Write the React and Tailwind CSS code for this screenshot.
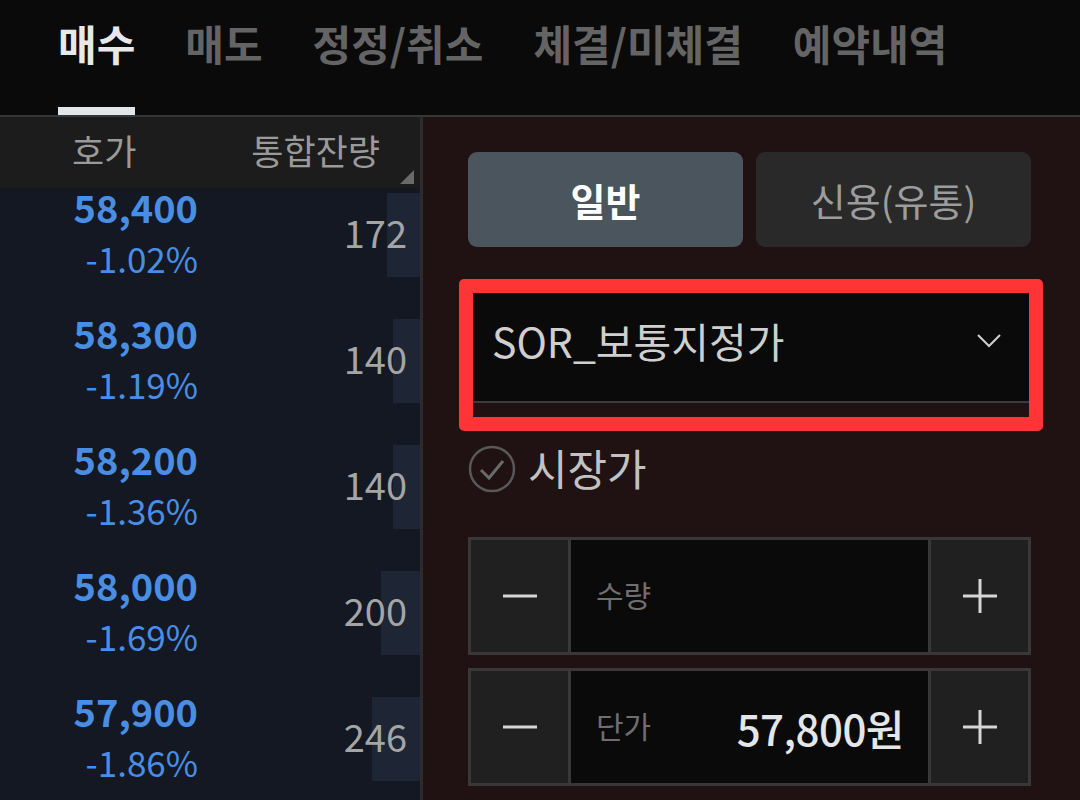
import React from "react";

const tabs = ["매수", "매도", "정정/취소", "체결/미체결", "예약내역"];

const rows = [
  { price: "58,400", pct: "-1.02%", vol: 172 },
  { price: "58,300", pct: "-1.19%", vol: 140 },
  { price: "58,200", pct: "-1.36%", vol: 140 },
  { price: "58,000", pct: "-1.69%", vol: 200 },
  { price: "57,900", pct: "-1.86%", vol: 246 },
];

const Minus = () => (
  <svg width="34" height="4" viewBox="0 0 34 4">
    <rect x="0" y="0.5" width="34" height="3" fill="#d6d6d6" />
  </svg>
);

const Plus = () => (
  <svg width="34" height="34" viewBox="0 0 34 34">
    <rect x="0" y="15.5" width="34" height="3" fill="#d6d6d6" />
    <rect x="15.5" y="0" width="3" height="34" fill="#d6d6d6" />
  </svg>
);

const Stepper = ({ label, value }) => (
  <div className="flex h-[118px] border-[3px] border-[#383838] bg-[#383838] gap-[3px]">
    <div className="w-[97px] bg-[#202020] flex items-center justify-center">
      <Minus />
    </div>
    <div className="flex-1 bg-[#0a0a0a] flex items-center justify-between pl-[25px] pr-[24px]">
      <span className="text-[30px] text-[#6f6f6f] -mt-[3px]">{label}</span>
      {value && (
        <span className="text-[42px] font-medium text-[#e4e6e8] tracking-[-0.5px]">{value}</span>
      )}
    </div>
    <div className="w-[97px] bg-[#202020] flex items-center justify-center">
      <Plus />
    </div>
  </div>
);

export default function App() {
  return (
    <div
      className="w-[1080px] h-[800px] overflow-hidden bg-[#0a0a0a] flex flex-col"
      style={{ fontFamily: '"Noto Sans CJK KR", "Noto Sans", sans-serif' }}
    >
      {/* top tabs */}
      <div className="h-[115px] flex pl-[58px] gap-[50px] shrink-0">
        {tabs.map((t, i) => (
          <div key={t} className="flex flex-col justify-between h-full">
            <span
              className={
                "pt-[14px] text-[42px] font-bold leading-[58px] " +
                (i === 0 ? "text-[#e6e8ea]" : "text-[#646464]")
              }
            >
              {t}
            </span>
            <div className={"h-[8px] " + (i === 0 ? "bg-[#e3e6e8]" : "bg-transparent")} />
          </div>
        ))}
      </div>
      <div className="h-[2px] bg-[#363636] shrink-0" />

      <div className="flex flex-1 min-h-0">
        {/* order book */}
        <div className="w-[420px] bg-[#131822] flex flex-col">
          <div className="h-[71px] shrink-0 bg-[#1c1c1c] relative flex items-center justify-between pl-[72px] pr-[40px] pb-[5px]">
            <span className="text-[35px] text-[#9a9a9a]">호가</span>
            <span className="text-[35px] text-[#9a9a9a]">통합잔량</span>
            <svg className="absolute right-[6px] bottom-[4px]" width="14" height="14" viewBox="0 0 14 14">
              <polygon points="14,0 14,14 0,14" fill="#6a6a6a" />
            </svg>
          </div>
          {rows.map((r) => (
            <div key={r.price} className="h-[126px] relative shrink-0">
              <div
                className="absolute right-0 top-[5px] h-[84px] bg-[#1e2534]"
                style={{ width: Math.round(r.vol / 5.15) + "px" }}
              />
              <div className="relative flex items-start">
                <div className="w-[198px] flex flex-col items-end">
                  <span className="text-[38px] font-bold text-[#4a8ee4] leading-[38px]">{r.price}</span>
                  <span className="text-[35px] text-[#4a8ee4] leading-[40px] mt-[12px]">{r.pct}</span>
                </div>
                <div className="flex-1 flex justify-end pr-[13px] pt-[21px]">
                  <span className="text-[38px] text-[#a5a5a5] leading-[46px]">{r.vol}</span>
                </div>
              </div>
            </div>
          ))}
        </div>
        <div className="w-[3px] bg-[#2c2c2c]" />

        {/* order form */}
        <div className="flex-1 bg-[#201213] pl-[45px] pr-[49px] pt-[35px] flex flex-col">
          <div className="grid grid-cols-2 gap-[13px]">
            <div className="h-[95px] rounded-[9px] bg-[#4a555e] flex items-center justify-center text-[38px] font-bold text-white">
              일반
            </div>
            <div className="h-[95px] rounded-[9px] bg-[#292929] flex items-center justify-center text-[38px] text-[#9c9c9c]">
              신용(유통)
            </div>
          </div>

          <div className="relative mt-[38px]">
            <div className="h-[118px] bg-[#0a0a0a] border-b-[2px] border-[#3c3c3c] flex items-center justify-between pl-[24px] pr-[30px] pb-[4px]">
              <span className="text-[41px] text-[#cfcfcf]">SOR_보통지정가</span>
              <svg width="24" height="14" viewBox="0 0 24 14">
                <polyline points="1,1 12,12 23,1" fill="none" stroke="#cfcfcf" strokeWidth="2" />
              </svg>
            </div>
            <div className="absolute left-[-9px] right-[-12px] top-[-6px] bottom-[-28px] border-[14px] border-[#ff3437] rounded-[5px]" />
          </div>

          <div className="mt-[42px] flex items-center gap-[12px] h-[48px]">
            <svg width="48" height="48" viewBox="0 0 48 48">
              <circle cx="24" cy="24" r="22" fill="none" stroke="#585858" strokeWidth="2.5" />
              <polyline points="13,25 21,33 35,16" fill="none" stroke="#6a6a6a" strokeWidth="3" />
            </svg>
            <span className="text-[43px] text-[#c2c2c2] leading-[48px] -mt-[4px]">시장가</span>
          </div>

          <div className="mt-[44px] flex flex-col gap-[13px]">
            <Stepper label="수량" />
            <Stepper label="단가" value="57,800원" />
          </div>
        </div>
      </div>
    </div>
  );
}
